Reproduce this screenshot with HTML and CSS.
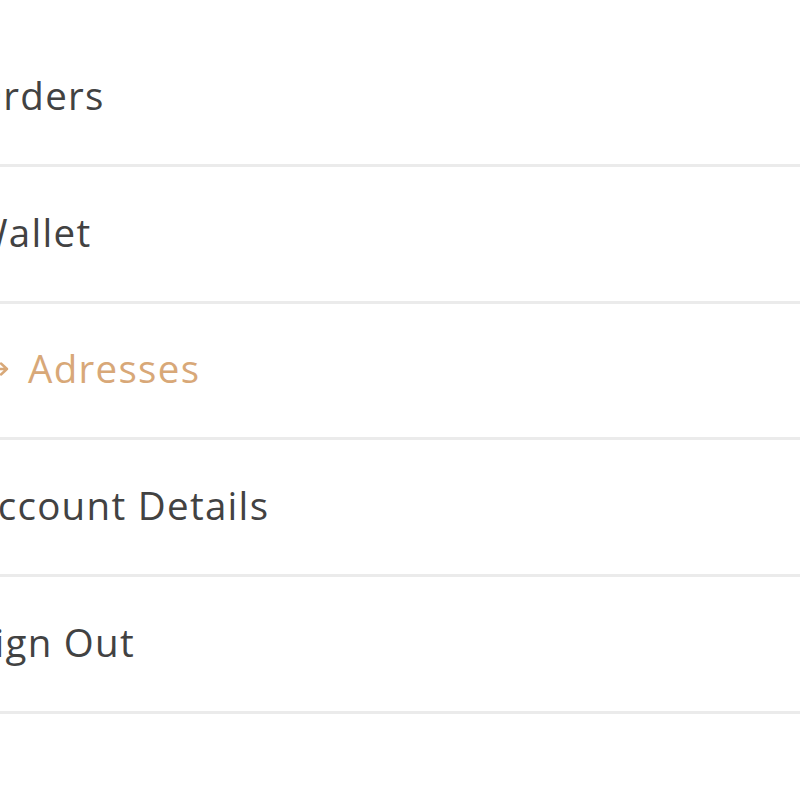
FILE: index.html
```html
<!DOCTYPE html>
<html>
<head>
<meta charset="utf-8">
<link rel="stylesheet" href="styles.css">
</head>
<body>
<nav class="account-nav">
  <ul class="menu">
    <li class="menu-item"><span class="label">Orders</span></li>
    <li class="menu-item"><span class="label">Wallet</span></li>
    <li class="menu-item active">
      <svg class="arrow" width="37" height="16" viewBox="0 0 37 16" aria-hidden="true">
        <path d="M1 8 H35 M29 2.5 L35 8 L29 13.5" fill="none" stroke="currentColor" stroke-width="2.4" stroke-linecap="round" stroke-linejoin="round"/>
      </svg>
      <span class="label">Adresses</span>
    </li>
    <li class="menu-item"><span class="label">Account Details</span></li>
    <li class="menu-item"><span class="label">Sign Out</span></li>
  </ul>
</nav>
</body>
</html>
```

FILE: styles.css
```css
html, body {
  margin: 0;
  padding: 0;
  background: #ffffff;
  overflow: hidden;
  width: 800px;
  height: 800px;
}

.account-nav {
  padding-top: 30px;
}

.menu {
  list-style: none;
  margin: 0 0 0 -28px;
  padding: 0;
}

.menu-item {
  display: flex;
  align-items: center;
  height: 133.75px;
  border-bottom: 3px solid #ebebeb;
  font-family: "Open Sans", sans-serif;
  font-size: 38.5px;
  color: #424242;
  letter-spacing: 1.3px;
}

.menu-item .label {
  position: relative;
  top: -2px;
}

.menu-item.active {
  color: #d8a878;
}

.arrow {
  flex: none;
  margin-right: 19px;
  position: relative;
  top: -1px;
}
```
